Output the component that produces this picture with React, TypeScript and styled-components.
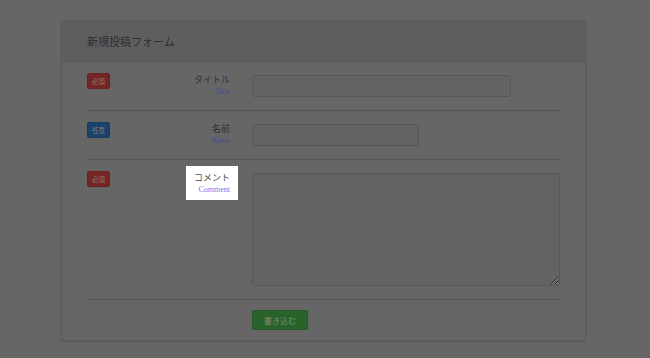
import * as React from 'react';
import styled, { createGlobalStyle, css } from 'styled-components';

const GlobalStyle = createGlobalStyle`
  html, body {
    margin: 0;
    padding: 0;
    background: #aaaaaa;
    font-family: "Noto Sans CJK JP", "Noto Sans", sans-serif;
  }
`;

const Page = styled.div`
  padding: 20px 0 18px 61px;
`;

// dims everything except the highlighted step
const Overlay = styled.div`
  position: fixed;
  inset: 0;
  background: rgba(0, 0, 0, 0.4);
  z-index: 100;
`;

const Panel = styled.div`
  width: 525px;
  box-sizing: border-box;
  background: #ababab;
  border: 1px solid #979797;
  border-radius: 4px;
  box-shadow: 0 1px 2px rgba(0, 0, 0, 0.15);
`;

const PanelHeading = styled.div`
  height: 40px;
  display: flex;
  align-items: center;
  padding: 0 25px;
  background: #9d9d9d;
  border-bottom: 1px solid #959595;
  border-radius: 3px 3px 0 0;
  font-size: 11px;
  color: #4f4f4f;
`;

const PanelBody = styled.div`
  padding: 0 25px;
`;

const Row = styled.div<{ $last?: boolean }>`
  display: grid;
  grid-template-columns: 151px 1fr;
  column-gap: 14px;
  align-items: start;
  padding: ${p => (p.$last ? '10px 0 10px' : '13px 0')};
  border-bottom: ${p => (p.$last ? 'none' : '1px solid #8e8e8e')};
`;

const LabelArea = styled.div`
  display: flex;
  justify-content: space-between;
  align-items: flex-start;
  margin: -7px 0 -5px;
`;

const badgeColors = {
  required: { bg: '#c63f3d', border: '#b33836' },
  optional: { bg: '#2b6fb5', border: '#2763a2' },
};

const Badge = styled.span<{ $kind: 'required' | 'optional' }>`
  margin-top: 5px;
  width: 23px;
  height: 16px;
  box-sizing: border-box;
  display: flex;
  align-items: center;
  justify-content: center;
  border-radius: 2px;
  font-size: 6.5px;
  color: #dccaca;
  background: ${p => badgeColors[p.$kind].bg};
  border: 1px solid ${p => badgeColors[p.$kind].border};
`;

const LabelBox = styled.div<{ $highlight?: boolean }>`
  padding: 5px 8px;
  text-align: right;
  ${p =>
    p.$highlight &&
    css`
      position: relative;
      z-index: 101;
      background: #ffffff;
    `}
`;

const LabelText = styled.div`
  font-size: 9px;
  line-height: 13px;
  color: #505050;
`;

const SubLabel = styled.div`
  font-family: "Liberation Serif", serif;
  font-size: 8px;
  line-height: 11px;
  color: #6680f0;
`;

const TextInput = styled.input<{ $width: number }>`
  display: block;
  box-sizing: border-box;
  width: ${p => p.$width}px;
  height: 22px;
  margin: 0;
  background: #a6a6a6;
  border: 1px solid #929292;
  border-radius: 3px;
  outline: none;
`;

const TextArea = styled.textarea`
  display: block;
  box-sizing: border-box;
  width: 308px;
  height: 113px;
  margin: 0;
  background: #a6a6a6;
  border: 1px solid #929292;
  border-radius: 3px;
  outline: none;
`;

const SubmitButton = styled.button`
  display: block;
  width: 56px;
  height: 20px;
  padding: 0;
  border: 1px solid #3f963f;
  border-radius: 2px;
  background: #45a545;
  color: #d0e0d0;
  font-family: inherit;
  font-size: 8px;
`;

interface IFieldProps {
  kind: 'required' | 'optional';
  label: string;
  sub: string;
  highlight?: boolean;
  children: React.ReactNode;
}

function Field(props: IFieldProps) {
  return (
    <Row>
      <LabelArea>
        <Badge $kind={props.kind}>{props.kind === 'required' ? '必須' : '任意'}</Badge>
        <LabelBox $highlight={props.highlight}>
          <LabelText>{props.label}</LabelText>
          <SubLabel>{props.sub}</SubLabel>
        </LabelBox>
      </LabelArea>
      <div>{props.children}</div>
    </Row>
  );
}

export default function App() {
  return (
    <>
      <GlobalStyle />
      <Page>
        <Panel>
          <PanelHeading>新規投稿フォーム</PanelHeading>
          <PanelBody>
            <Field kind="required" label="タイトル" sub="Title">
              <TextInput $width={259} />
            </Field>
            <Field kind="optional" label="名前" sub="Name">
              <TextInput $width={167} />
            </Field>
            <Field kind="required" label="コメント" sub="Comment" highlight>
              <TextArea />
            </Field>
            <Row $last>
              <div />
              <div>
                <SubmitButton>書き込む</SubmitButton>
              </div>
            </Row>
          </PanelBody>
        </Panel>
      </Page>
      <Overlay />
    </>
  );
}
